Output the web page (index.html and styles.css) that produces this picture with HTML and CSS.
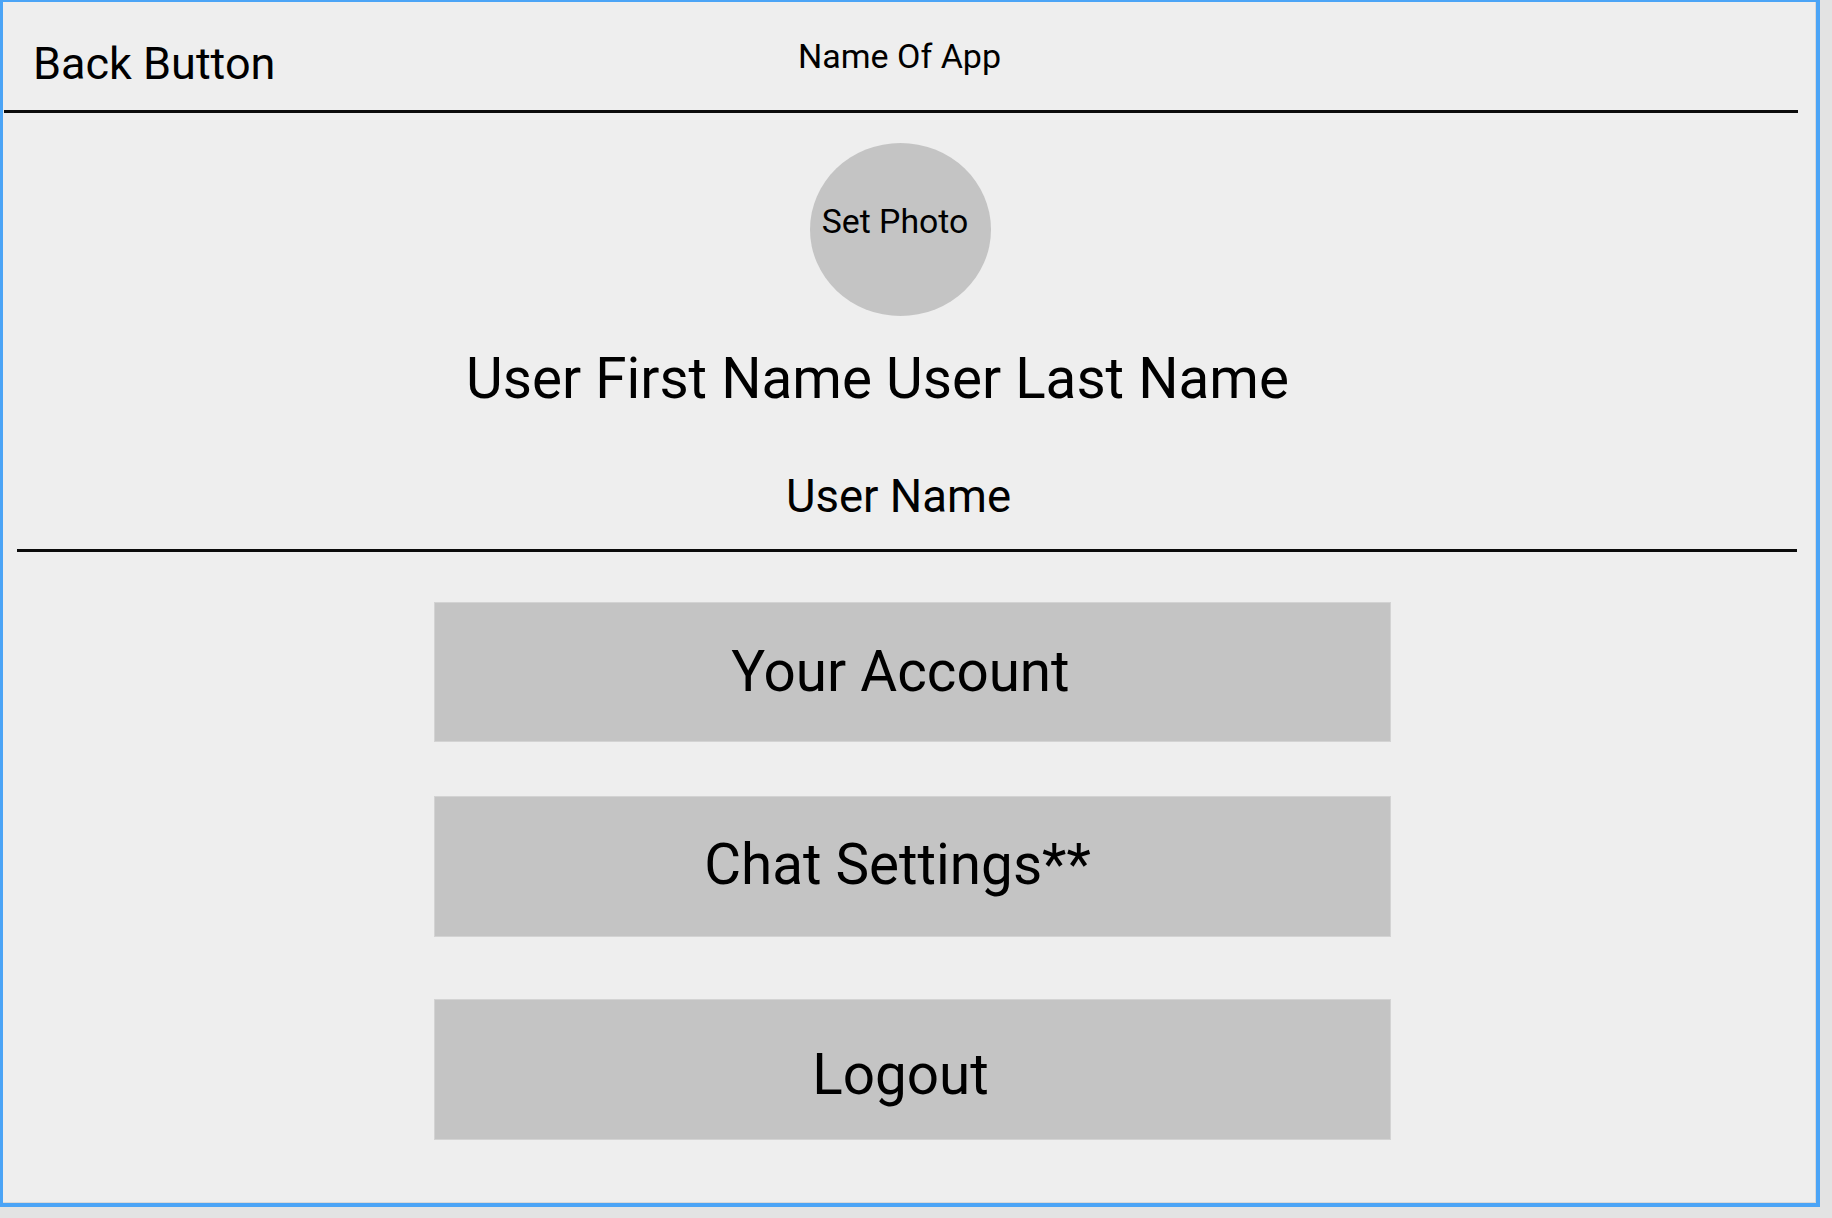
FILE: index.html
```html
<!DOCTYPE html>
<html lang="en">
<head>
<meta charset="utf-8">
<title>Profile</title>
<link rel="stylesheet" href="styles.css">
</head>
<body>
<div class="frame">
  <header class="topbar">
    <div class="back">Back Button</div>
    <div class="app-name">Name Of App</div>
    <div class="spacer"></div>
  </header>
  <section class="profile">
    <div class="photo"><span class="photo-label">Set Photo</span></div>
    <div class="full-name">User First Name User Last Name</div>
    <div class="user-name">User Name</div>
  </section>
  <nav class="actions">
    <div class="action">Your Account</div>
    <div class="action action-2">Chat Settings**</div>
    <div class="action action-3">Logout</div>
  </nav>
</div>
</body>
</html>
```

FILE: styles.css
```css
html, body {
  margin: 0;
  padding: 0;
}

body {
  background: #e3e3e3;
  font-family: Roboto, "Liberation Sans", Arial, sans-serif;
  color: #000;
  width: 1832px;
  height: 1218px;
  overflow: hidden;
}

.frame {
  box-sizing: border-box;
  width: 1820px;
  height: 1207px;
  background: #eeeeee;
  border-style: solid;
  border-color: #4ba4f6;
  border-width: 2px 4px 4px 3px;
  box-shadow: inset -1px -1px 0 0 #d9d9d9;
}

.topbar {
  display: grid;
  grid-template-columns: 1fr auto 1fr;
  align-items: start;
  margin-left: 1px;
  width: 1794px;
  height: 108px;
  border-bottom: 3px solid #0b0b0b;
}

.back {
  font-size: 45px;
  line-height: 45px;
  margin-top: 39px;
  padding-left: 29px;
  white-space: nowrap;
}

.app-name {
  font-size: 34px;
  line-height: 34px;
  margin-top: 37px;
  margin-right: 3px;
  white-space: nowrap;
}

.profile {
  display: flex;
  flex-direction: column;
  align-items: center;
  margin-left: 14px;
  width: 1780px;
  box-sizing: border-box;
  padding-right: 14px;
  padding-bottom: 30px;
  border-bottom: 3px solid #0b0b0b;
}

.photo {
  box-sizing: border-box;
  width: 181px;
  height: 173px;
  margin-top: 30px;
  border-radius: 50%;
  background: #c4c4c4;
  display: flex;
  justify-content: center;
  padding-top: 62px;
  padding-right: 10px;
}

.photo-label {
  font-size: 33.8px;
  line-height: 33px;
  white-space: nowrap;
}

.full-name {
  font-size: 56.6px;
  line-height: 56px;
  margin-top: 35px;
  margin-right: 45px;
  white-space: nowrap;
}

.user-name {
  font-size: 45.5px;
  line-height: 45px;
  margin-top: 67px;
  margin-right: 3px;
  white-space: nowrap;
}

.actions {
  display: flex;
  flex-direction: column;
  padding-left: 431px;
  padding-top: 50px;
}

.action {
  box-sizing: border-box;
  width: 957px;
  height: 140px;
  background: #c4c4c4;
  border: 1px solid #d3d3d3;
  display: flex;
  align-items: center;
  justify-content: center;
  padding-right: 24px;
  font-size: 56.6px;
  line-height: 56px;
  white-space: nowrap;
}

.action-2 {
  margin-top: 54px;
  height: 141px;
  padding-bottom: 4px;
  padding-right: 30px;
}

.action-3 {
  margin-top: 62px;
  height: 141px;
  padding-top: 10px;
}
```
